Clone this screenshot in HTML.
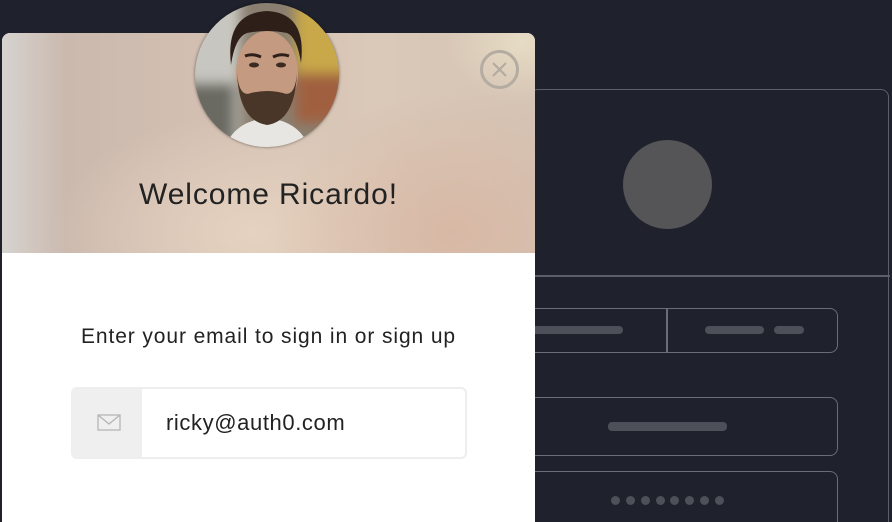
<!DOCTYPE html>
<html><head><meta charset="utf-8"><style>
*{margin:0;padding:0;box-sizing:border-box}
html,body{width:892px;height:522px;overflow:hidden}
body{background:#1f222d;font-family:"Liberation Sans",sans-serif;position:relative}
.bgp{position:absolute;left:530px;top:89px;width:359px;height:433px;border:1.5px solid #5c5f68;border-bottom:none;border-radius:8px 8px 0 0}
.hr{position:absolute;left:530px;top:275px;width:360px;height:2px;background:#5c5f68}
.circ{position:absolute;left:623px;top:140px;width:89px;height:89px;border-radius:50%;background:#555558}
.box{position:absolute;border:1.5px solid #6a6d75;border-radius:8px}
.bar{position:absolute;height:8px;border-radius:4px;background:#4d5059}
.dot{position:absolute;width:9px;height:9px;border-radius:50%;background:#4d5059;top:496px}
.modal{position:absolute;left:2px;top:33px;width:533px;height:489px;background:#fff;border-radius:8px 8px 0 0;overflow:hidden}
.head{position:absolute;left:0;top:0;width:533px;height:220px;background:
radial-gradient(ellipse 180px 140px at 450px 200px,#d8b8a5 0%,rgba(216,184,165,0) 100%),
radial-gradient(ellipse 200px 120px at 250px 200px,#e6d2c0 0%,rgba(230,210,192,0) 100%),
radial-gradient(ellipse 80px 60px at 520px 10px,#e6dcc4 0%,rgba(230,220,196,0) 100%),
linear-gradient(90deg,#d6d3cf 0%,#cbb9ae 12%,#d3c0b2 40%,#dac8b8 70%,#d5c3b4 100%)}
.welcome{position:absolute;left:0;width:533px;top:145px;text-align:center;font-size:30px;letter-spacing:0.9px;color:#222}
.close{position:absolute;left:478px;top:17px;width:39px;height:39px;border-radius:50%;border:3px solid #b4aba1}
.avatar{position:absolute;left:195px;top:3px;width:144px;height:144px;border-radius:50%;overflow:hidden;box-shadow:0 0 3px rgba(0,0,0,.5)}
.sub{position:absolute;left:0;width:533px;top:292px;text-align:center;font-size:21px;letter-spacing:0.9px;color:#222}
.inp{position:absolute;left:69px;top:354px;width:396px;height:72px;border:2px solid #eee;border-radius:6px;overflow:hidden}
.ic{position:absolute;left:0;top:0;width:69px;height:100%;background:#efefef}
.val{position:absolute;left:93px;top:21px;font-size:22px;letter-spacing:0.6px;color:#222}
</style></head><body>
<div class="bgp"></div><div class="hr"></div><div class="circ"></div>
<div class="box" style="left:520px;top:308px;width:318px;height:45px"></div>
<div style="position:absolute;left:666px;top:308px;width:2px;height:45px;background:#6a6d75"></div>
<div class="bar" style="left:530px;top:326px;width:93px"></div>
<div class="bar" style="left:705px;top:326px;width:59px"></div>
<div class="bar" style="left:774px;top:326px;width:30px"></div>
<div class="box" style="left:520px;top:397px;width:318px;height:59px"></div>
<div class="bar" style="left:608px;top:422px;width:119px;height:9px"></div>
<div class="box" style="left:520px;top:471px;width:318px;height:51px;border-bottom:none;border-radius:8px 8px 0 0"></div>
<div class="dot" style="left:611px"></div><div class="dot" style="left:626px"></div><div class="dot" style="left:641px"></div><div class="dot" style="left:656px"></div><div class="dot" style="left:670px"></div><div class="dot" style="left:685px"></div><div class="dot" style="left:700px"></div><div class="dot" style="left:715px"></div>
<div class="modal">
<div class="head"></div>
<div class="welcome">Welcome Ricardo!</div>
<div class="close"><svg width="33" height="33" viewBox="0 0 33 33" style="position:absolute;left:0;top:0"><path d="M10 10L23 23M23 10L10 23" stroke="#b4aba1" stroke-width="2.2"/></svg></div>
<div class="sub">Enter your email to sign in or sign up</div>
<div class="inp"><div class="ic"><svg width="26" height="18" viewBox="0 0 26 18" style="position:absolute;left:24px;top:25px"><rect x="1" y="1" width="22" height="15" fill="none" stroke="#b5b5b5" stroke-width="1.3"/><path d="M1 1L12 10L23 1" fill="none" stroke="#b5b5b5" stroke-width="1.3"/></svg></div><div class="val">ricky@auth0.com</div></div>
</div>
<div class="avatar"><svg width="144" height="144" viewBox="0 0 144 144">
<defs><filter id="b"><feGaussianBlur stdDeviation="6"/></filter></defs>
<rect width="144" height="144" fill="#8a7f70"/>
<g filter="url(#b)">
<rect x="-10" y="-10" width="55" height="160" fill="#c8c6c0"/>
<rect x="100" y="-10" width="54" height="80" fill="#c9a84a"/>
<rect x="100" y="70" width="54" height="50" fill="#a06040"/>
<rect x="-10" y="80" width="50" height="74" fill="#6b6a62"/>
</g>
<path d="M30 144 Q40 118 72 115 Q104 118 114 144Z" fill="#e8e6e2"/>
<ellipse cx="72" cy="70" rx="31" ry="42" fill="#c49a80"/>
<path d="M42 70 Q44 118 72 122 Q100 118 102 70 Q100 95 88 90 Q72 86 56 90 Q44 95 42 70Z" fill="#4a3628"/>
<path d="M36 62 Q30 10 72 8 Q112 10 106 60 Q102 34 92 30 Q72 26 52 30 Q40 34 36 62Z" fill="#2e2018"/>
<ellipse cx="59" cy="62" rx="5" ry="2.5" fill="#3a2a20"/><ellipse cx="86" cy="62" rx="5" ry="2.5" fill="#3a2a20"/>
<path d="M50 53 Q58 50 66 54M78 54 Q86 50 94 53" stroke="#2e2018" stroke-width="3" fill="none"/>
</svg></div>
</body></html>
